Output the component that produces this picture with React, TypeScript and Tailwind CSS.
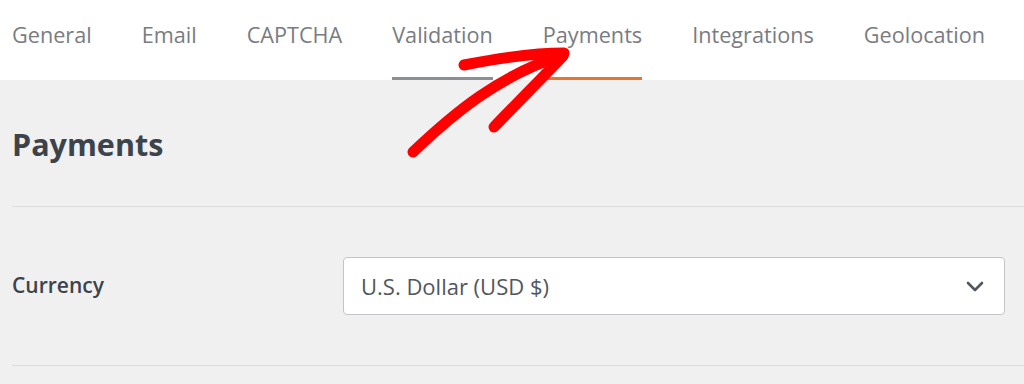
import React from "react";

const tabs = ["General", "Email", "CAPTCHA", "Validation", "Payments", "Integrations", "Geolocation"];

export default function App() {
  return (
    <div className="relative w-[1024px] h-[384px] overflow-hidden bg-[#f0f0f1]" style={{ fontFamily: '"Open Sans", "Noto Sans", sans-serif' }}>
      <div className="h-[80px] bg-white flex items-stretch pl-[12px] gap-[50px]">
        {tabs.map((t) => (
          <div
            key={t}
            className={
              "flex flex-col justify-start pt-[20px] text-[21.65px] leading-[30px] text-[#787c82] border-b-[3px] " +
              (t === "Validation" ? "border-[#8c8f94]" : t === "Payments" ? "border-[#e27730]" : "border-transparent")
            }
          >
            {t}
          </div>
        ))}
      </div>
      <div className="pl-[12px]">
        <div className="h-[127px] flex items-center border-b border-[#dcdcde]">
          <h1 className="text-[30.5px] font-bold text-[#3c434a] pt-[3px]">Payments</h1>
        </div>
        <div className="h-[159px] flex items-center border-b border-[#dcdcde]">
          <div className="w-[331px] text-[21px] font-semibold text-[#3c434a]">Currency</div>
          <div className="w-[662px] h-[58px] bg-white border border-[#c3c4c7] rounded-[4px] flex items-center justify-between pl-[17px] pr-[20px]">
            <span className="text-[22px] text-[#50575e]">U.S. Dollar (USD $)</span>
            <svg width="18" height="11" viewBox="0 0 18 11">
              <path d="M2 2 L9 9 L16 2" fill="none" stroke="#50575e" strokeWidth="2.6" strokeLinecap="round" strokeLinejoin="round" />
            </svg>
          </div>
        </div>
      </div>
      <svg className="absolute left-0 top-0 pointer-events-none" width="1024" height="384" viewBox="0 0 1024 384">
        <path d="M413 152 C 455 112, 500 75, 563 55" fill="none" stroke="#ff0000" strokeWidth="11" strokeLinecap="round" />
        <path d="M464 65 C 500 58, 535 53, 564 53" fill="none" stroke="#ff0000" strokeWidth="11" strokeLinecap="round" />
        <path d="M494 127 C 520 100, 542 78, 563 56" fill="none" stroke="#ff0000" strokeWidth="11" strokeLinecap="round" />
      </svg>
    </div>
  );
}
